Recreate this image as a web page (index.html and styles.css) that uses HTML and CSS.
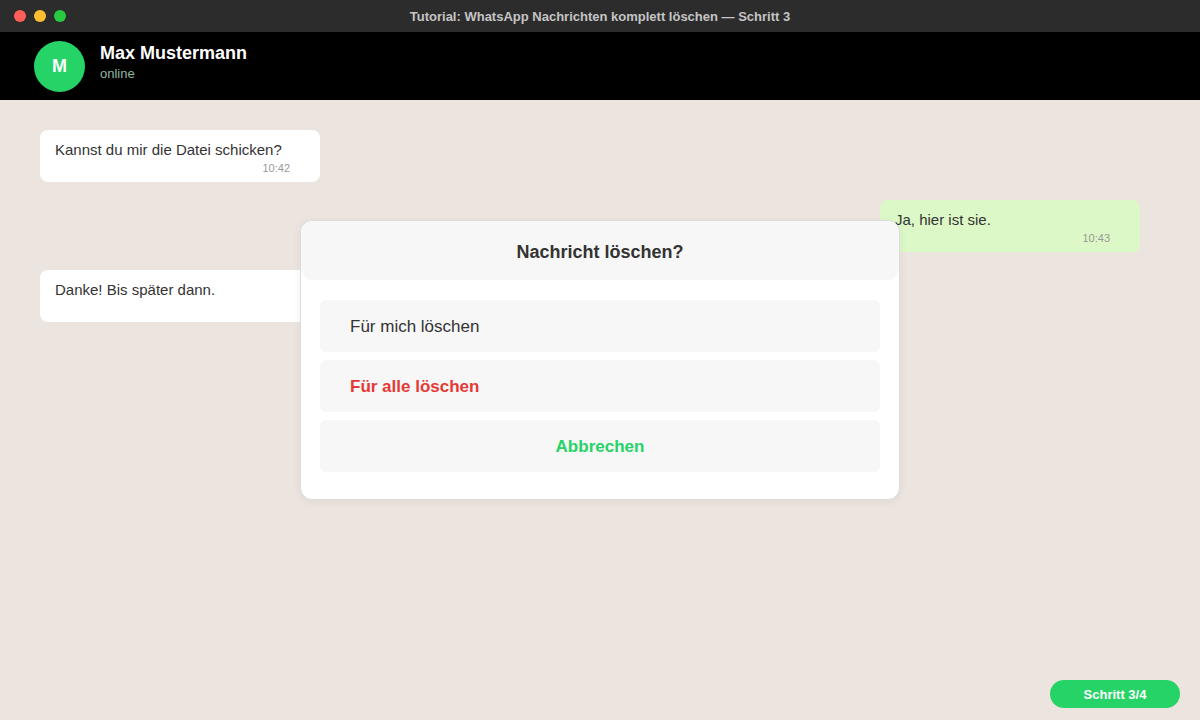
FILE: index.html
```html
<!DOCTYPE html>
<html lang="de">

<head>
    <meta charset="UTF-8">
    <title>Tutorial: WhatsApp Nachrichten komplett löschen — Schritt 3</title>
    <link rel="stylesheet" href="styles.css">
</head>

<body>

    <!-- Fenster-Titelleiste -->
    <div class="titlebar">
        <div class="lights">
            <span class="light red"></span>
            <span class="light yellow"></span>
            <span class="light green"></span>
        </div>
        <div class="title">Tutorial: WhatsApp Nachrichten komplett löschen — Schritt 3</div>
    </div>

    <!-- Chat-Kopf -->
    <header class="chat_header">
        <div class="avatar">M</div>
        <div class="contact">
            <div class="name">Max Mustermann</div>
            <div class="status">online</div>
        </div>
    </header>

    <!-- Nachrichten -->
    <main class="chat">
        <div class="msg in">
            <div class="text">Kannst du mir die Datei schicken?</div>
            <div class="time">10:42</div>
        </div>
        <div class="msg out">
            <div class="text">Ja, hier ist sie.</div>
            <div class="time">10:43</div>
        </div>
        <div class="msg in">
            <div class="text">Danke! Bis später dann.</div>
            <div class="time">&nbsp;</div>
        </div>

        <!-- Löschen-Dialog -->
        <div class="dialog">
            <div class="dialog_title">Nachricht löschen?</div>
            <div class="options">
                <div class="option">Für mich löschen</div>
                <div class="option danger">Für alle löschen</div>
                <div class="option cancel">Abbrechen</div>
            </div>
        </div>

        <div class="step">Schritt 3/4</div>
    </main>

</body>

</html>
```

FILE: styles.css
```css
* {
    box-sizing: border-box;
}

body {
    margin: 0;
    width: 1200px;
    height: 720px;
    overflow: hidden;
    font-family: "Liberation Sans", Arial, sans-serif;
    background-color: #ece5df;
    display: flex;
    flex-direction: column;
}

/* titelleiste */
.titlebar {
    height: 32px;
    background-color: #2c2c2c;
    position: relative;
    display: flex;
    align-items: center;
    justify-content: center;
}

.lights {
    position: absolute;
    left: 14px;
    top: 10px;
    display: flex;
    gap: 8px;
}

.light {
    width: 12px;
    height: 12px;
    border-radius: 50%;
}

.red {
    background-color: #ff5f57;
}

.yellow {
    background-color: #febc2e;
}

.green {
    background-color: #28c840;
}

.title {
    font-size: 13px;
    font-weight: bold;
    color: #c4c4c4;
}

/* chat kopf */
.chat_header {
    height: 68px;
    background-color: #000;
    display: flex;
    align-items: center;
    padding-left: 34px;
    gap: 15px;
}

.avatar {
    width: 51px;
    height: 51px;
    border-radius: 50%;
    background-color: #25d366;
    color: #fff;
    font-weight: bold;
    font-size: 18px;
    display: flex;
    align-items: center;
    justify-content: center;
}

.contact {
    margin-top: -8px;
}

.name {
    font-size: 18px;
    font-weight: bold;
    color: #fff;
    line-height: 24px;
}

.status {
    font-size: 13px;
    color: #8fb8a4;
    line-height: 18px;
}

/* nachrichten */
.chat {
    flex: 1;
    position: relative;
    padding: 30px 60px 0 40px;
    display: flex;
    flex-direction: column;
    gap: 18px;
}

.msg {
    border-radius: 8px;
    padding: 10px 15px 6px;
    color: #333;
}

.msg.in {
    width: 280px;
    background-color: #fff;
    align-self: flex-start;
}

.msg.out {
    width: 260px;
    background-color: #dcf8c6;
    align-self: flex-end;
}

.text {
    font-size: 15px;
    line-height: 20px;
}

.time {
    font-size: 11px;
    line-height: 16px;
    color: #999;
    text-align: right;
    padding-right: 15px;
}

/* dialog */
.dialog {
    position: absolute;
    left: 300px;
    top: 120px;
    width: 600px;
    height: 280px;
    background-color: #fff;
    border: 1px solid #dcdcdc;
    border-radius: 12px;
    box-shadow: 0 2px 8px rgba(0, 0, 0, 0.06);
}

.dialog_title {
    height: 59px;
    padding-top: 3px;
    background-color: #f7f7f7;
    border-radius: 12px;
    display: flex;
    align-items: center;
    justify-content: center;
    font-size: 18px;
    font-weight: bold;
    color: #333;
}

.options {
    padding: 20px 19px 0;
    display: flex;
    flex-direction: column;
    gap: 8px;
}

.option {
    height: 52px;
    background-color: #f7f7f7;
    border-radius: 6px;
    display: flex;
    align-items: center;
    padding-left: 30px;
    padding-top: 2px;
    font-size: 17px;
    color: #333;
}

.option.danger {
    color: #e53935;
    font-weight: bold;
}

.option.cancel {
    color: #25d366;
    font-weight: bold;
    justify-content: center;
    padding-left: 0;
}

/* schritt anzeige */
.step {
    position: absolute;
    right: 20px;
    bottom: 12px;
    width: 130px;
    height: 28px;
    border-radius: 14px;
    background-color: #25d366;
    color: #fff;
    font-size: 13px;
    font-weight: bold;
    display: flex;
    align-items: center;
    justify-content: center;
}
```
